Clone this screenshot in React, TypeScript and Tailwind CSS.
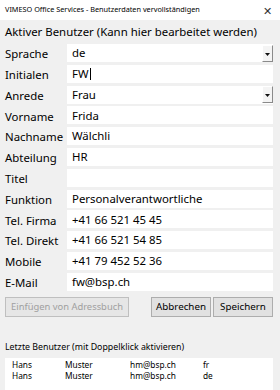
import { useState } from 'react';

const fields = [
    { label: 'Sprache', value: 'de', combo: true },
    { label: 'Initialen', value: 'FW', cursor: true },
    { label: 'Anrede', value: 'Frau', combo: true },
    { label: 'Vorname', value: 'Frida' },
    { label: 'Nachname', value: 'Wälchli' },
    { label: 'Abteilung', value: 'HR' },
    { label: 'Titel', value: '' },
    { label: 'Funktion', value: 'Personalverantwortliche' },
    { label: 'Tel. Firma', value: '+41 66 521 45 45' },
    { label: 'Tel. Direkt', value: '+41 66 521 54 85' },
    { label: 'Mobile', value: '+41 79 452 52 36' },
    { label: 'E-Mail', value: 'fw@bsp.ch' },
];

const recent = [
    { first: 'Hans', last: 'Muster', mail: 'hm@bsp.ch', lang: 'fr' },
    { first: 'Hans', last: 'Muster', mail: 'hm@bsp.ch', lang: 'de' },
];

// Little 3D drop-down arrow of the old combo box
const ComboArrow = () => (
    <div className="w-[11px] h-[17px] bg-[#f4f4f4] border-r border-b border-[#8a8a8a] border-t border-l border-t-white border-l-white flex items-end justify-center pb-[5px]">
        <svg width="5" height="3" viewBox="0 0 5 3">
            <path d="M0 0 H5 L2.5 3 Z" fill="#111" />
        </svg>
    </div>
);

const App = () => {
    const [selected, setSelected] = useState<number | null>(null);

    return (
        <div className="w-[280px] h-[390px] bg-[#f0f0f0] overflow-hidden flex flex-col text-black font-['Noto_Sans',_'Open_Sans',_sans-serif]">
            {/* Title bar */}
            <div className="h-[20px] bg-white flex items-center justify-between pl-[5px] pr-[8px] shrink-0">
                <span className="text-[7.3px] leading-none whitespace-nowrap">VIMESO Office Services - Benutzerdaten vervollständigen</span>
                <span className="text-[11px] leading-none text-[#333]">✕</span>
            </div>

            <div className="px-[5px] pr-[7px] flex flex-col">
                <h1 className="text-[11.4px] leading-[16px] mt-[4px] font-normal whitespace-nowrap">Aktiver Benutzer (Kann hier bearbeitet werden)</h1>

                {/* Form rows */}
                <div className="mt-[4px] flex flex-col gap-[2.8px]">
                    {fields.map((f) => (
                        <div key={f.label} className="flex items-center h-[18px]">
                            <span className="w-[62px] shrink-0 text-[11.4px] leading-none pt-[2px] whitespace-nowrap">{f.label}</span>
                            <div className="flex-1 h-[18px] bg-white flex items-center justify-between pl-[5px]">
                                <span className="text-[11.4px] leading-none flex items-center whitespace-nowrap">
                                    {f.value}
                                    {f.cursor && <span className="inline-block w-px h-[12px] bg-black ml-[1px]" />}
                                </span>
                                {f.combo && <ComboArrow />}
                            </div>
                        </div>
                    ))}
                </div>

                {/* Buttons */}
                <div className="mt-[6px] flex items-center">
                    <button
                        disabled
                        className="w-[124px] h-[20px] bg-[#e6e6e6] border border-[#bfbfbf] text-[9.4px] text-[#a0a0a0] leading-none whitespace-nowrap"
                    >
                        Einfügen von Adressbuch
                    </button>
                    <div className="flex-1" />
                    <button className="w-[60px] h-[20px] bg-[#e1e1e1] border border-[#adadad] text-[9.8px] leading-none">
                        Abbrechen
                    </button>
                    <button className="w-[60px] h-[20px] ml-[2px] bg-[#e1e1e1] border border-[#adadad] text-[9.8px] leading-none">
                        Speichern
                    </button>
                </div>

                <h2 className="text-[8.8px] leading-[16px] mt-[22px] whitespace-nowrap">Letzte Benutzer (mit Doppelklick aktivieren)</h2>

                {/* Recent users list */}
                <div className="mt-[3px] h-[40px] bg-white pt-[1px]">
                    {recent.map((r, i) => (
                        <div
                            key={i}
                            onDoubleClick={() => setSelected(i)}
                            className={`flex text-[8.3px] leading-[11px] whitespace-nowrap ${selected === i ? 'bg-[#cce8ff]' : ''}`}
                        >
                            <span className="w-[60px] pl-[7px]">{r.first}</span>
                            <span className="w-[65px]">{r.last}</span>
                            <span className="w-[73px]">{r.mail}</span>
                            <span>{r.lang}</span>
                        </div>
                    ))}
                </div>
            </div>
        </div>
    );
};

export default App;
